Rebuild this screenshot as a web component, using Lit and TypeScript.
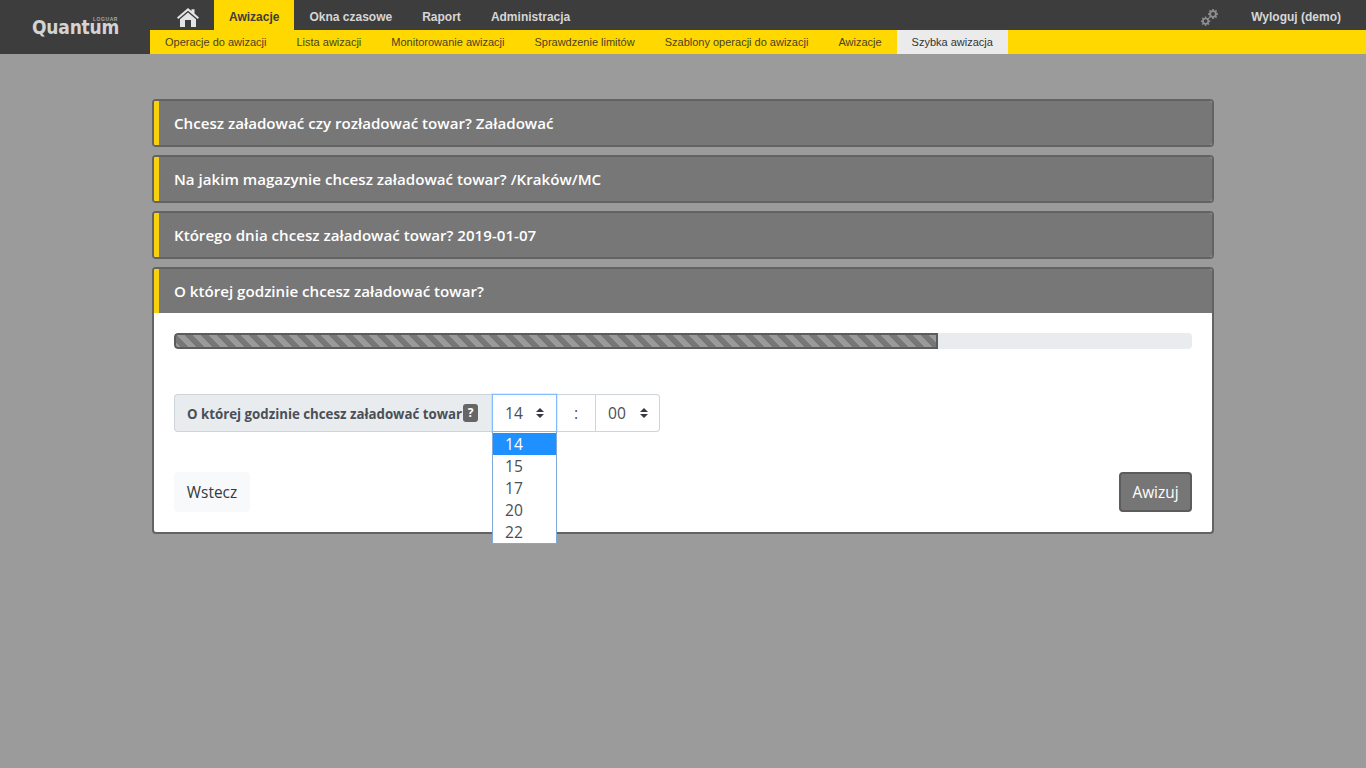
import { LitElement, html, css, svg } from "lit";
import { customElement } from "lit/decorators.js";

const gear = (cx: number, cy: number, r: number) => {
  const teeth = [];
  for (let i = 0; i < 8; i++) {
    teeth.push(svg`<rect x=${cx - r * 0.2} y=${cy - r * 1.2} width=${r * 0.4} height=${r * 0.5} transform=${`rotate(${i * 45} ${cx} ${cy})`}></rect>`);
  }
  return svg`${teeth}<circle cx=${cx} cy=${cy} r=${r * 0.68} fill="none" stroke="currentColor" stroke-width=${r * 0.42}></circle>`;
};

const updown = html`<svg class="arr" viewBox="0 0 10 12" width="10" height="12"><path d="M5 1 9 5H1zM5 11 1 7H9z" fill="#343a40"></path></svg>`;

@customElement("app-root")
export class AppRoot extends LitElement {
  static styles = css`
    :host { display: block; min-height: 768px; background: #9b9b9b; font-family: "Open Sans", "Noto Sans", sans-serif; color: #495057; }
    * { box-sizing: border-box; }
    .head { display: flex; height: 54px; background: #3d3d3d; font-family: "Liberation Sans", Arial, sans-serif; }
    .logo { width: 150px; flex: none; padding: 16px 0 0 32px; color: #d4d4d4; position: relative; }
    .logo b { font: 700 19px/22px "DejaVu Sans Condensed", "DejaVu Sans", sans-serif; letter-spacing: -0.2px; display: block; }
    .logo i { position: absolute; left: 93px; top: 16px; font: 700 5px/6px "Liberation Sans", sans-serif; letter-spacing: .55px; font-style: normal; color: #a8a8a8; }
    .navs { flex: 1; display: flex; flex-direction: column; }
    .top { height: 30px; display: flex; align-items: stretch; }
    .home { width: 64px; display: flex; align-items: center; justify-content: center; padding: 4px 0 0 11px; }
    .top a { padding: 0 15px; font-size: 12px; font-weight: 700; color: #d6d6d6; line-height: 34px; height: 30px; }
    .top a.on { background: #ffd800; color: #3d3d3d; }
    .sp { flex: 1; }
    .gear { color: #8e8e8e; margin: 9px 33px 0 0; }
    .top a.out { padding: 0 25px 0 0; }
    .sub { height: 24px; background: #ffd800; display: flex; }
    .sub a { padding: 0 15px; font-size: 11px; line-height: 25px; color: #4a4320; }
    .sub a.on { background: #ebebeb; color: #333; }
    main { width: 1062px; margin: 45px auto 0; display: flex; flex-direction: column; gap: 8px; }
    .card { border: 2px solid #636363; border-radius: 4px; background: #fff; }
    .ch { height: 44px; background: #777; border-left: 5px solid #f7d10e; padding: 0 0 0 15px; color: #fff; font-size: 15.13px; font-weight: 600; line-height: 44px; border-radius: 2px 2px 0 0; }
    .card.closed .ch { border-radius: 2px; }
    .cb { padding: 20px; }
    .prog { height: 16px; background: #e9ecef; border-radius: 4px; overflow: hidden; }
    .bar { height: 16px; width: 75%; border: 2px solid #5c5c5c; border-radius: 4px 0 0 4px;
      background-color: #777;
      background-image: linear-gradient(45deg, #9a9a9a 25%, transparent 25%, transparent 50%, #9a9a9a 50%, #9a9a9a 75%, transparent 75%, transparent);
      background-size: 16px 16px; }
    .row { display: flex; margin-top: 45px; height: 38px; position: relative; }
    .lab { width: 318px; background: #e9ecef; border: 1px solid #ced4da; border-right: 0; border-radius: 4px 0 0 4px; font-size: 13.27px; font-weight: 700; display: flex; align-items: center; padding-left: 12px; gap: 1px; white-space: nowrap; line-height: 20px; }
    .lab span.t { padding-top: 1px; }
    .q { width: 15px; height: 18px; border-radius: 3px; background: #666; color: #fff; font-size: 12px; font-weight: 700; line-height: 18px; text-align: center; }
    .sel { border: 1px solid #ced4da; background: #fff; font-size: 15.6px; color: #495057; display: flex; align-items: center; justify-content: space-between; }
    .sel.h { width: 65px; padding: 0 11px 0 12px; border-color: #80bdff; box-shadow: 0 0 0 1px rgba(128,189,255,.25); position: relative; z-index: 1; }
    .sel.m { width: 64px; padding: 0 10px 0 12px; border-left: 0; border-radius: 0 4px 4px 0; }
    .colon { width: 39px; border: 1px solid #ced4da; border-left: 0; display: flex; align-items: center; justify-content: center; font-size: 16px; background: #fff; }
    .menu { position: absolute; left: 318px; top: 38px; width: 65px; border: 1px solid #7ea9d8; border-top: 0; background: #fff; z-index: 2; height: 112px; padding-top: 1px; }
    .menu div { height: 22px; line-height: 22px; padding-left: 12px; font-size: 15.6px; color: #495057; }
    .menu div.on { background: #1e90ff; color: #fff; }
    .btns { display: flex; justify-content: space-between; margin-top: 40px; }
    .btn { height: 40px; padding: 0 12px; border-radius: 4px; font-size: 15.4px; line-height: 41px; }
    .back { background: #f8f9fa; color: #343a40; width: 76px; text-align: center; }
    .go { background: #767676; color: #fff; border: 2px solid #5c5c5c; line-height: 37px; width: 73px; text-align: center; padding: 0; }
  `;

  render() {
    const top = (t: string) => html`<div class="card closed"><div class="ch">${t}</div></div>`;
    return html`
      <div class="head">
        <div class="logo"><b>Quantum</b><i>LOGUAR</i></div>
        <div class="navs">
          <div class="top">
            <div class="home"><svg width="22" height="19" viewBox="0 0 22 19"><path fill="#e4e4e4" d="M11 0 14.5 3V1.2H17.5V5.6L22 9.6 20.7 11 11 2.8 1.3 11 0 9.6ZM11 4.4 19 11.2V19H14V12H8V19H3V11.2Z"></path></svg></div>
            <a class="on">Awizacje</a><a>Okna czasowe</a><a>Raport</a><a>Administracja</a>
            <span class="sp"></span>
            <svg class="gear" width="17" height="18" viewBox="0 0 17 18" fill="currentColor">${gear(12, 5, 4.2)}${gear(4.6, 12.2, 3.9)}</svg>
            <a class="out">Wyloguj (demo)</a>
          </div>
          <div class="sub">
            <a>Operacje do awizacji</a><a>Lista awizacji</a><a>Monitorowanie awizacji</a><a>Sprawdzenie limitów</a><a>Szablony operacji do awizacji</a><a>Awizacje</a><a class="on">Szybka awizacja</a>
          </div>
        </div>
      </div>
      <main>
        ${top("Chcesz załadować czy rozładować towar? Załadować")}
        ${top("Na jakim magazynie chcesz załadować towar? /Kraków/MC")}
        ${top("Którego dnia chcesz załadować towar? 2019-01-07")}
        <div class="card">
          <div class="ch">O której godzinie chcesz załadować towar?</div>
          <div class="cb">
            <div class="prog"><div class="bar"></div></div>
            <div class="row">
              <div class="lab"><span class="t">O której godzinie chcesz załadować towar</span> <span class="q">?</span></div>
              <div class="sel h">14 ${updown}</div>
              <div class="colon">:</div>
              <div class="sel m">00 ${updown}</div>
              <div class="menu"><div class="on">14</div><div>15</div><div>17</div><div>20</div><div>22</div></div>
            </div>
            <div class="btns"><div class="btn back">Wstecz</div><div class="btn go">Awizuj</div></div>
          </div>
        </div>
      </main>
    `;
  }
}
